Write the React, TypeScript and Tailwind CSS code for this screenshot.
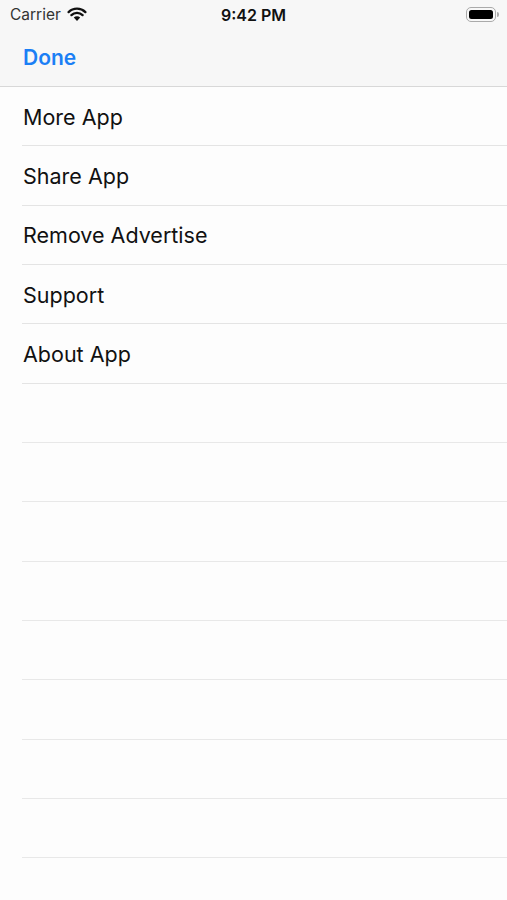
export default function App() {
  const items = ["More App", "Share App", "Remove Advertise", "Support", "About App"];
  const empty = Array.from({ length: 8 });

  return (
    <div className="w-[507px] h-[900px] overflow-hidden bg-[#fdfdfd] font-['Inter','Liberation_Sans',sans-serif] text-[#111]">
      {/* Status + nav bar */}
      <div className="bg-[#f7f7f7] border-b border-[#d8d8d8]">
        <div className="relative flex items-center h-[29px] pl-[10px] pr-[8px] text-[15.5px]">
          <div className="flex items-center gap-[6px] text-[#333]">
            <span>Carrier</span>
            <svg width="20" height="15" viewBox="0 0 20 15" className="mt-[-1px]">
              <path d="M10 14 L6.8 10.6 A4.6 4.6 0 0 1 13.2 10.6 Z" fill="#111" />
              <path d="M4.4 8.1 A8 8 0 0 1 15.6 8.1" stroke="#111" strokeWidth="2.3" fill="none" strokeLinecap="round" />
              <path d="M1.6 5.1 A12 12 0 0 1 18.4 5.1" stroke="#111" strokeWidth="2.3" fill="none" strokeLinecap="round" />
            </svg>
          </div>
          <span className="absolute left-[221px] top-[3px] text-[16px] font-semibold text-[#111]">9:42 PM</span>
          <div className="ml-auto flex items-center">
            <div className="w-[30px] h-[15px] rounded-[5px] border border-[#aaa] p-[2px]">
              <div className="w-full h-full rounded-[2.5px] bg-black" />
            </div>
            <div className="w-[2px] h-[5px] rounded-r-sm bg-[#aaa] ml-[1px]" />
          </div>
        </div>
        <div className="h-[57px] flex items-center px-[23px]">
          <span className="text-[21px] font-semibold text-[#1b7ff5]">Done</span>
        </div>
      </div>

      {/* List */}
      <div>
        {items.map((label) => (
          <div key={label} className="h-[59.33px] pl-[22px]">
            <div className="h-full flex items-center border-b border-[#e4e4e4] pl-[1px] pt-[1px] text-[21.5px] text-[#111]">
              {label}
            </div>
          </div>
        ))}
        {empty.map((_, i) => (
          <div key={i} className="h-[59.33px] pl-[22px]">
            <div className="h-full border-b border-[#e8e8e8]" />
          </div>
        ))}
      </div>
    </div>
  );
}
